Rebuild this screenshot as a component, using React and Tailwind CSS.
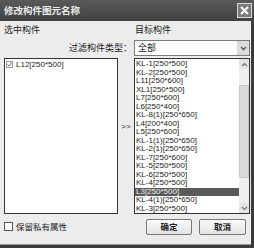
import React from 'react';

const items = [
  'KL-1[250*500]',
  'KL-2[250*500]',
  'L11[250*600]',
  'XL1[250*500]',
  'L7[250*600]',
  'L6[250*400]',
  'KL-8(1)[250*650]',
  'L4[200*400]',
  'L5[250*600]',
  'KL-1(1)[250*650]',
  'KL-2(1)[250*650]',
  'KL-7[250*600]',
  'KL-5[250*500]',
  'KL-6[250*500]',
  'KL-4[250*500]',
  'L3[250*500]',
  'KL-4(1)[250*650]',
  'KL-3[250*500]',
];

const cjk = { fontFamily: '"Noto Sans CJK SC", "Noto Sans", sans-serif' };
const latin = { fontFamily: '"Liberation Sans", "Noto Sans CJK SC", sans-serif' };

const App = () => {
  return (
    <div className="w-[254px] h-[248px] flex flex-col bg-[#3b3b3b] overflow-hidden" style={cjk}>
      {/* title bar */}
      <div className="h-[21px] flex items-center justify-between pl-[4px] pr-[2px] bg-gradient-to-b from-[#5a5a5a] to-[#404040]">
        <span className="text-[9.5px] font-bold text-[#eeeeee]">修改构件图元名称</span>
        <div className="w-[15px] h-[15px] border border-[#d8d8d8] bg-[#7a7a7a] flex items-center justify-center">
          <svg width="11" height="11" viewBox="0 0 11 11">
            <path d="M2 2 L9 9 M9 2 L2 9" stroke="#ffffff" strokeWidth="2" />
          </svg>
        </div>
      </div>

      {/* body */}
      <div className="flex-1 bg-[#ececec] mr-[3px] mb-[3px] border-b border-[#9a9a9a] flex flex-col pl-[4px] pr-[1px]">
        <div className="h-[16px] mt-[1px] flex items-center text-[9px] text-[#222]">
          <span className="w-[130px]">选中构件</span>
          <span className="ml-[1px]">目标构件</span>
        </div>

        <div className="h-[16px] mt-[2px] flex items-center">
          <span className="w-[130px] text-right text-[9px] text-[#222] pr-[2px]">过滤构件类型：</span>
          <div className="w-[116px] h-[16px] bg-white border border-[#7a7a7a] flex items-center justify-between">
            <span className="pl-[3px] text-[9px] text-[#222]">全部</span>
            <div className="w-[12px] h-[14px] bg-[#dcdcdc] flex items-center justify-center">
              <svg width="7" height="5" viewBox="0 0 7 5">
                <path d="M1 1 L3.5 3.5 L6 1" stroke="#555" strokeWidth="1.3" fill="none" />
              </svg>
            </div>
          </div>
        </div>

        <div className="flex mt-[2px] h-[156px]">
          <div className="w-[114px] h-full bg-white border border-[#333] pt-[1px] pl-[1px]">
            <div className="flex items-center gap-[3px] h-[9px]">
              <div className="w-[7px] h-[7px] border border-[#999] bg-[#f4f4f4] flex items-center justify-center">
                <svg width="5" height="5" viewBox="0 0 5 5">
                  <path d="M0.5 2.5 L2 4 L4.5 0.5" stroke="#777" strokeWidth="1" fill="none" />
                </svg>
              </div>
              <span className="text-[8px] text-[#222] leading-[9px]" style={latin}>L12[250*500]</span>
            </div>
          </div>

          <div className="w-[16px] flex items-center justify-center text-[8px] text-[#333] pb-[18px]" style={latin}>
            &gt;&gt;
          </div>

          <div className="w-[116px] h-full bg-white border border-[#333] flex">
            <div className="flex-1 flex flex-col pt-[1px]" style={latin}>
              {items.map((item, index) => (
                <div
                  key={index}
                  className={
                    item === 'L3[250*500]'
                      ? 'h-[8.5px] leading-[8.5px] text-[8px] pl-[1px] bg-[#5a5a5a] text-[#f0f0f0] whitespace-nowrap'
                      : 'h-[8.5px] leading-[8.5px] text-[8px] pl-[1px] text-[#222] whitespace-nowrap'
                  }
                >
                  {item}
                </div>
              ))}
            </div>
            <div className="w-[10px] h-full bg-[#ededed] flex flex-col">
              <div className="h-[10px] bg-[#e4e4e4] flex items-center justify-center">
                <svg width="7" height="5" viewBox="0 0 7 5">
                  <path d="M1 4 L3.5 1.5 L6 4" stroke="#777" strokeWidth="1.2" fill="none" />
                </svg>
              </div>
              <div className="h-[16px] bg-[#f0f0f0]" />
              <div className="h-[93px] bg-[#dadada] border border-[#c8c8c8] rounded-[1px]" />
              <div className="flex-1 bg-[#f0f0f0]" />
              <div className="h-[10px] bg-[#e4e4e4] flex items-center justify-center">
                <svg width="7" height="5" viewBox="0 0 7 5">
                  <path d="M1 1 L3.5 3.5 L6 1" stroke="#777" strokeWidth="1.2" fill="none" />
                </svg>
              </div>
            </div>
          </div>
        </div>

        <div className="flex items-center mt-[4px] h-[17px]">
          <div className="w-[9px] h-[9px] border border-[#555] bg-white" />
          <span className="ml-[3px] text-[8.5px] text-[#222]">保留私有属性</span>
          <div className="ml-auto flex gap-[7px] mr-[4px]">
            <button className="w-[46px] h-[16px] border border-[#777] rounded-[2px] bg-gradient-to-b from-[#fafafa] to-[#e2e2e2] text-[8.5px] font-bold text-[#222] flex items-center justify-center">
              确定
            </button>
            <button className="w-[47px] h-[16px] border border-[#777] rounded-[2px] bg-gradient-to-b from-[#fafafa] to-[#e2e2e2] text-[8.5px] font-bold text-[#222] flex items-center justify-center">
              取消
            </button>
          </div>
        </div>
      </div>
    </div>
  );
};

export default App;
